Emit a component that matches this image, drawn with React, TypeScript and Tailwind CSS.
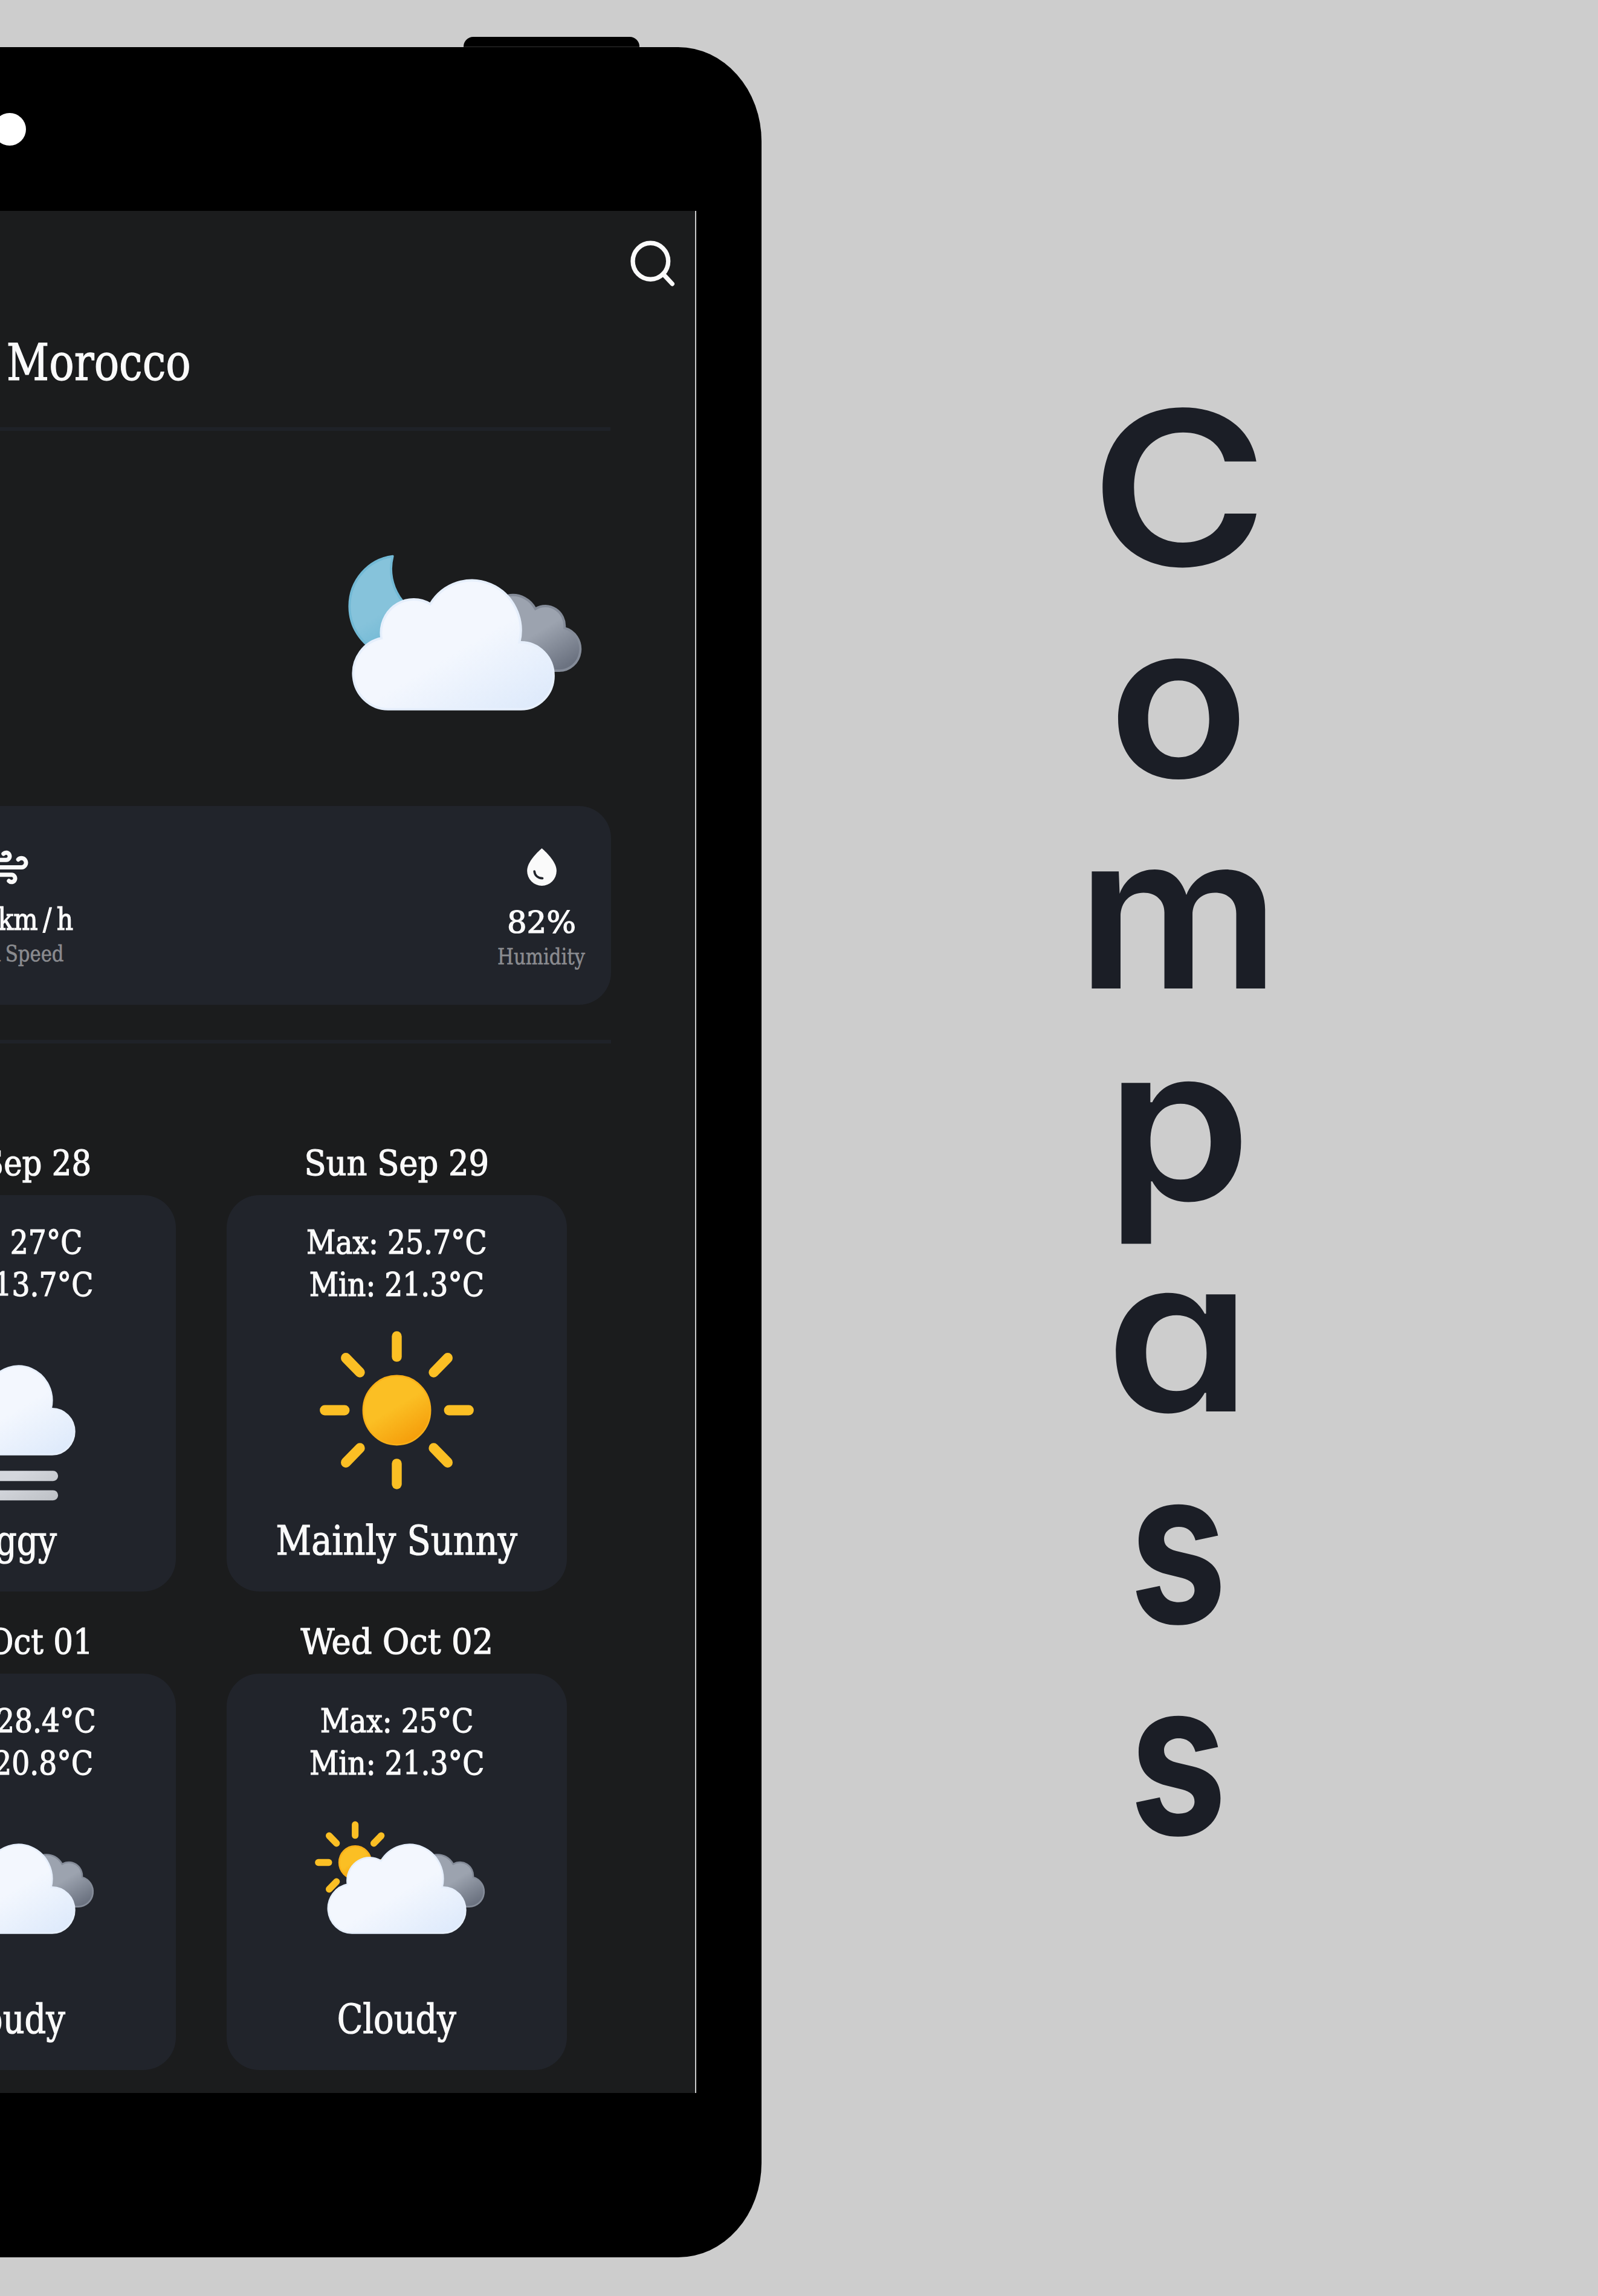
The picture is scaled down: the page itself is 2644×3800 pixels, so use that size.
import type { ReactNode } from "react";

function SearchIcon() {
  return (
    <svg viewBox="0 0 24 24" preserveAspectRatio="none" className="h-[90px] w-[88px]" fill="none" stroke="#fafafa" strokeWidth="2" strokeLinecap="round" strokeLinejoin="round">
      <circle cx="11" cy="11" r="8" />
      <path d="M20.8 21l-4.15-4.35" />
    </svg>
  );
}

function WindIcon() {
  return (
    <svg viewBox="0 0 24 24" preserveAspectRatio="none" className="h-[73px] w-[72px]" fill="none" stroke="#fafafa" strokeWidth="2.3" strokeLinecap="round" strokeLinejoin="round">
      <path d="M9.59 4.59A2 2 0 1 1 11 8H2m10.59 11.41A2 2 0 1 0 14 16H2m15.73-8.27A2.5 2.5 0 1 1 19.5 12H2" />
    </svg>
  );
}

function DropIcon() {
  return (
    <svg viewBox="0 0 146 186" className="h-[62px] w-[49px]">
      <path d="M73 0C98 22 146 68 146 112A73 74 0 0 1 0 112C0 68 48 22 73 0Z" fill="#fafafa" />
      <path d="M36 114C38 135 54 148 76 149" fill="none" stroke="#21242b" strokeWidth="11" strokeLinecap="round" />
    </svg>
  );
}

function Gradients({ id }: { id: string }) {
  return (
    <defs>
      <linearGradient id={`${id}-cloud`} x1="22.56" y1="21.96" x2="39.2" y2="50.8" gradientUnits="userSpaceOnUse">
        <stop offset="0" stopColor="#f3f7fe" />
        <stop offset=".45" stopColor="#f3f7fe" />
        <stop offset="1" stopColor="#deeafb" />
      </linearGradient>
      <linearGradient id={`${id}-gray`} x1="46" y1="23" x2="54.5" y2="37.5" gradientUnits="userSpaceOnUse">
        <stop offset="0" stopColor="#9ca3af" />
        <stop offset=".45" stopColor="#9ca3af" />
        <stop offset="1" stopColor="#6b7280" />
      </linearGradient>
      <linearGradient id={`${id}-moon`} x1="13.58" y1="15.57" x2="24.73" y2="34.89" gradientUnits="userSpaceOnUse">
        <stop offset="0" stopColor="#86c3db" />
        <stop offset=".45" stopColor="#86c3db" />
        <stop offset="1" stopColor="#5eafcf" />
      </linearGradient>
      <linearGradient id={`${id}-sun`} x1="0.25" y1="0.07" x2="0.75" y2="0.93">
        <stop offset="0" stopColor="#fbbf24" />
        <stop offset=".45" stopColor="#fbbf24" />
        <stop offset="1" stopColor="#f59e0b" />
      </linearGradient>
      <linearGradient id={`${id}-fog`} x1="27.5" y1="50.2" x2="36.5" y2="65.8" gradientUnits="userSpaceOnUse">
        <stop offset="0" stopColor="#d4d7dd" />
        <stop offset=".3" stopColor="#d4d7dd" />
        <stop offset="1" stopColor="#bec1c6" />
      </linearGradient>
    </defs>
  );
}

function Cloud({ id }: { id: string }) {
  return (
    <path
      d="M46.5 31.5h-.32a10.49 10.49 0 0 0-19.11-8 7 7 0 0 0-10.57 6 7.21 7.21 0 0 0 .1 1.14A7.5 7.5 0 0 0 18 45.5h28.5a7 7 0 0 0 0-14z"
      fill={`url(#${id}-cloud)`}
      stroke="#e6effc"
      strokeWidth=".5"
    />
  );
}

function GrayCloud({ id }: { id: string }) {
  return (
    <path
      d="M44 37.45H54.65A4.55 4.55 0 0 0 55.85 28.5A4.15 4.15 0 0 0 49.6 24.5A5.5 5.5 0 0 0 39.5 25.5V37.45z"
      fill={`url(#${id}-gray)`}
      stroke="#848b98"
      strokeWidth=".5"
    />
  );
}

function MoonCloud() {
  return (
    <svg viewBox="0 0 64 64" preserveAspectRatio="none" className="h-[506px] w-[494px]">
      <Gradients id="n" />
      <path
        d="M29.33 26.68a10.61 10.61 0 0 1-10.68-10.54A10.5 10.5 0 0 1 19 13.5a10.54 10.54 0 1 0 11.5 13.11 11.48 11.48 0 0 1-1.17.07z"
        fill="url(#n-moon)"
        stroke="#72b9d5"
        strokeWidth=".5"
        strokeLinejoin="round"
      />
      <GrayCloud id="n" />
      <Cloud id="n" />
    </svg>
  );
}

const angles = [0, 45, 90, 135, 180, 225, 270, 315];

function Sun() {
  return (
    <svg viewBox="0 0 64 64" preserveAspectRatio="none" className="h-[348px] w-[339px]">
      <Gradients id="s" />
      <circle cx="32" cy="32" r="10.5" fill="url(#s-sun)" stroke="#f8af18" strokeWidth=".5" />
      {angles.map((a) => (
        <path key={a} d="M32 15.71V9.5" transform={`rotate(${a} 32 32)`} stroke="#fbbf24" strokeWidth="3.1" strokeLinecap="round" />
      ))}
    </svg>
  );
}

function SunCloud({ id }: { id: string }) {
  return (
    <svg viewBox="0 0 64 64" preserveAspectRatio="none" className="h-[348px] w-[339px]">
      <Gradients id={id} />
      <circle cx="19" cy="24" r="5" fill={`url(#${id}-sun)`} stroke="#f8af18" strokeWidth=".5" />
      {angles.map((a) => (
        <path key={a} d="M19 15.75V12.5" transform={`rotate(${a} 19 24)`} stroke="#fbbf24" strokeWidth="2.1" strokeLinecap="round" />
      ))}
      <GrayCloud id={id} />
      <Cloud id={id} />
    </svg>
  );
}

function Fog() {
  return (
    <svg viewBox="0 0 64 64" preserveAspectRatio="none" className="h-[348px] w-[339px]">
      <Gradients id="f" />
      <Cloud id="f" />
      <g fill="none" stroke="url(#f-fog)" strokeWidth="3.1" strokeLinecap="round">
        <path d="M17 52h29.8" />
        <path d="M17 57.9h29.8" />
      </g>
    </svg>
  );
}

type DayProps = {
  date: string;
  dateClass: string;
  max: string;
  min: string;
  icon: ReactNode;
  label: string;
  labelClass: string;
};

function Day({ date, dateClass, max, min, icon, label, labelClass }: DayProps) {
  return (
    <div className="flex w-[563px] flex-col items-center whitespace-nowrap">
      <div className={`h-[70px] text-[58px] leading-[70px] ${dateClass}`}>{date}</div>
      <div className="mt-[18px] flex h-[656px] w-full flex-col items-center rounded-[54px] bg-[#21242b] pt-[44px]">
        <div className="flex scale-x-[0.98] flex-col items-center text-[53.5px] leading-[70px]">
          <span>Max: {max}°C</span>
          <span>Min: {min}°C</span>
        </div>
        <div className="-mt-[2px]">{icon}</div>
        <div className={`mt-[2px] text-[68px] leading-[80px] ${labelClass}`}>{label}</div>
      </div>
    </div>
  );
}

function Screen() {
  return (
    <div className="flex h-[3115px] w-[1152px] flex-col overflow-hidden border-r-2 border-[#cbcbcb] bg-[#1b1c1d] font-['DejaVu_Serif_Condensed','DejaVu_Serif',serif] text-[#fafafa] [-webkit-text-stroke:1.2px_currentColor]">
      <div className="mt-[42px] flex justify-end pr-[26px]">
        <SearchIcon />
      </div>
      <div className="mt-[69px] flex h-[100px] w-[316px] justify-end">
        <span className="origin-right scale-x-[0.911] text-[84px] leading-[100px]">Morocco</span>
      </div>
      <div className="mt-[57px] h-[6px] w-[1010px] shrink-0 bg-[#1f2228]" />
      <div className="ml-[503px] mt-[101px]">
        <MoonCloud />
      </div>
      <div className="mt-[14px] flex h-[329px] w-[1011px] shrink-0 justify-between rounded-r-[53px] bg-[#21242b] pr-[43px]">
        <div className="-ml-[95px] flex w-[216px] flex-col items-center whitespace-nowrap pt-[65px]">
          <WindIcon />
          <div className="mt-[20px] flex w-full justify-end text-[51px] leading-[60px]">
            <span className="origin-right scale-x-[0.93]">
              km<span className="mx-[9px]">/</span>h
            </span>
          </div>
          <div className="mt-[4px] scale-x-[0.9] text-[38px] leading-[44px] text-[#8a8b8f] [-webkit-text-stroke:0.6px_currentColor] [word-spacing:-3px]">
            Wind Speed
          </div>
        </div>
        <div className="flex w-[144px] flex-col items-center whitespace-nowrap pt-[70px]">
          <DropIcon />
          <div className="mt-[31px] scale-x-[1.12] text-[51px] leading-[60px]">82%</div>
          <div className="mt-[4px] scale-x-[0.9] text-[38px] leading-[44px] text-[#8a8b8f] [-webkit-text-stroke:0.6px_currentColor]">
            Humidity
          </div>
        </div>
      </div>
      <div className="mt-[58px] h-[6px] w-[1011px] shrink-0 bg-[#1f2228]" />
      <div className="-ml-[272px] mt-[163px] grid w-[1210px] grid-cols-2 gap-x-[84px] gap-y-[48px]">
        <Day date="Sat Sep 28" dateClass="scale-x-[0.985]" max="27" min="13.7" icon={<Fog />} label="Foggy" labelClass="scale-x-[0.9]" />
        <Day date="Sun Sep 29" dateClass="scale-x-[1.01]" max="25.7" min="21.3" icon={<Sun />} label="Mainly Sunny" labelClass="scale-x-[0.937]" />
        <Day date="Tue Oct 01" dateClass="scale-x-[0.985]" max="28.4" min="20.8" icon={<SunCloud id="a" />} label="Cloudy" labelClass="scale-x-[0.911]" />
        <Day date="Wed Oct 02" dateClass="scale-x-[1.043]" max="25" min="21.3" icon={<SunCloud id="b" />} label="Cloudy" labelClass="scale-x-[0.911]" />
      </div>
    </div>
  );
}

function Title() {
  return (
    <div className="flex w-[500px] flex-col items-center pt-[632px] font-['Inter',sans-serif] text-[355px] font-[570] leading-[350px] text-[#1b1e26] [font-feature-settings:'cv11']">
      <span className="ml-[3px] scale-x-[1.12]">C</span>
      <span className="ml-[3px] scale-x-[1.08]">o</span>
      <span className="ml-[2px] scale-x-[1.055]">m</span>
      <span className="ml-[2px] scale-x-[1.085]">p</span>
      <span className="ml-[2px] scale-x-[1.085]">a</span>
      <span className="scale-x-[0.81] font-bold">s</span>
      <span className="scale-x-[0.81] font-bold">s</span>
    </div>
  );
}

export default function App() {
  return (
    <div className="flex h-[3800px] w-[2644px] overflow-hidden bg-[#cdcdcd]">
      <div className="w-[1260px] shrink-0 pt-[61px]">
        <div className="ml-[767px] h-[17px] w-[291px] rounded-t-[16px] border-b border-[#333] bg-black" />
        <div className="h-[3658px] w-[1260px] bg-black pt-[109px] [border-bottom-right-radius:138px_156px] [border-top-right-radius:138px_156px]">
          <div className="-ml-[11px] mb-[108px] h-[54px] w-[54px] rounded-full bg-white" />
          <Screen />
        </div>
      </div>
      <div className="ml-[439px]">
        <Title />
      </div>
    </div>
  );
}
